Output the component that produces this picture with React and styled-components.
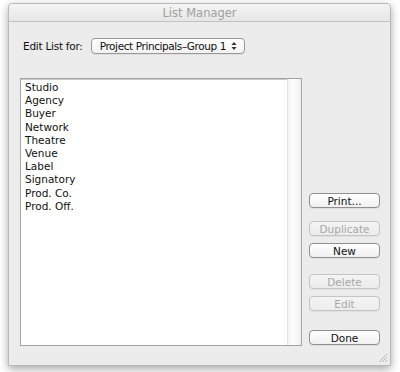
import React from "react";
import styled, { createGlobalStyle } from "styled-components";

const Global = createGlobalStyle`
  html, body { margin: 0; padding: 0; background: #ffffff; }
  body { font-family: "Lucida Grande", "DejaVu Sans", "Liberation Sans", sans-serif; }
`;

const Page = styled.div`
  width: 400px;
  height: 372px;
  padding: 3px 0 0 8px;
  box-sizing: border-box;
`;

const Window = styled.div`
  width: 383px;
  height: 363px;
  box-sizing: border-box;
  background: #ececec;
  border: 1px solid #b9b9b9;
  border-radius: 4px 4px 0 0;
  box-shadow: 0 3px 9px rgba(0, 0, 0, 0.35);
  display: flex;
  flex-direction: column;
  position: relative;
`;

const TitleBar = styled.div`
  height: 17px;
  border-bottom: 1px solid #c2c2c2;
  background: linear-gradient(#f4f4f4, #e6e6e6);
  border-radius: 4px 4px 0 0;
  display: flex;
  align-items: center;
  justify-content: center;
  font-size: 11.5px;
  color: #a0a0a0;
`;

const Content = styled.div`
  flex: 1;
  display: flex;
  flex-direction: column;
  padding: 15px 10px 19px 11px;
`;

const TopRow = styled.div`
  display: flex;
  align-items: center;
  height: 17px;
  padding-left: 3px;
  gap: 8px;
`;

const Label = styled.span`
  font-size: 10.5px;
  letter-spacing: -0.25px;
  white-space: nowrap;
  color: #111;
`;

const Select = styled.div`
  width: 154px;
  height: 16px;
  box-sizing: border-box;
  border: 1px solid #999;
  border-radius: 4px;
  background: linear-gradient(#ffffff, #f1f1f1);
  box-shadow: 0 1px 0 rgba(0,0,0,0.06);
  display: flex;
  align-items: center;
  justify-content: space-between;
  padding: 0 7px 0 8px;
  font-size: 10.5px;
  letter-spacing: -0.4px;
  white-space: nowrap;
  color: #111;
`;

const Arrows = styled.svg`
  width: 6px;
  height: 10px;
`;

const Body = styled.div`
  flex: 1;
  display: flex;
  margin-top: 24px;
  gap: 7px;
`;

const ListBox = styled.div`
  width: 282px;
  box-sizing: border-box;
  border: 1px solid #a4a4a4;
  box-shadow: inset 0 1px 0 #c9c9c9;
  background: #fff;
  display: flex;
`;

const Items = styled.ul`
  list-style: none;
  margin: 0;
  padding: 2px 0 0 4px;
  flex: 1;
`;

const Item = styled.li`
  font-size: 10.5px;
  line-height: 13.2px;
  color: #111;
`;

const Track = styled.div`
  width: 13px;
  border-left: 1px solid #e4e4e4;
  background: linear-gradient(90deg, #f3f3f3, #fdfdfd 40%, #f0f0f0);
`;

const Buttons = styled.div`
  display: flex;
  flex-direction: column;
  justify-content: flex-end;
  padding-bottom: 1px;
`;

const Button = styled.div`
  width: 71px;
  height: 15px;
  box-sizing: border-box;
  margin-top: ${(p) => p.$gap}px;
  border: 1px solid ${(p) => (p.$disabled ? "#c4c4c4" : "#8f8f8f")};
  border-radius: 4px;
  background: ${(p) =>
    p.$disabled ? "linear-gradient(#f4f4f4, #ececec)" : "linear-gradient(#ffffff, #f0f0f0)"};
  box-shadow: 0 1px 0 rgba(0,0,0,0.05);
  display: flex;
  align-items: center;
  justify-content: center;
  font-size: 10.5px;
  color: ${(p) => (p.$disabled ? "#a8a8a8" : "#111")};
`;

const Grip = styled.svg`
  position: absolute;
  right: 2px;
  bottom: 2px;
  width: 10px;
  height: 10px;
`;

const items = ["Studio", "Agency", "Buyer", "Network", "Theatre", "Venue", "Label", "Signatory", "Prod. Co.", "Prod. Off."];

const buttons = [
  { label: "Print...", gap: 0 },
  { label: "Duplicate", gap: 13, disabled: true },
  { label: "New", gap: 7 },
  { label: "Delete", gap: 16, disabled: true },
  { label: "Edit", gap: 7, disabled: true },
  { label: "Done", gap: 19 },
];

export default function App() {
  return (
    <Page>
      <Global />
      <Window>
        <TitleBar>List Manager</TitleBar>
        <Content>
          <TopRow>
            <Label>Edit List for:</Label>
            <Select>
              <span>Project Principals–Group 1</span>
              <Arrows viewBox="0 0 6 10">
                <path d="M0.5 4 L3 1 L5.5 4 Z" fill="#333" />
                <path d="M0.5 6 L3 9 L5.5 6 Z" fill="#333" />
              </Arrows>
            </Select>
          </TopRow>
          <Body>
            <ListBox>
              <Items>
                {items.map((t) => (
                  <Item key={t}>{t}</Item>
                ))}
              </Items>
              <Track />
            </ListBox>
            <Buttons>
              {buttons.map((b) => (
                <Button key={b.label} $gap={b.gap} $disabled={b.disabled}>
                  {b.label}
                </Button>
              ))}
            </Buttons>
          </Body>
        </Content>
        <Grip viewBox="0 0 10 10">
          <path d="M9 1 L1 9 M9 4 L4 9 M9 7 L7 9" stroke="#a8a8a8" strokeWidth="0.8" />
        </Grip>
      </Window>
    </Page>
  );
}
